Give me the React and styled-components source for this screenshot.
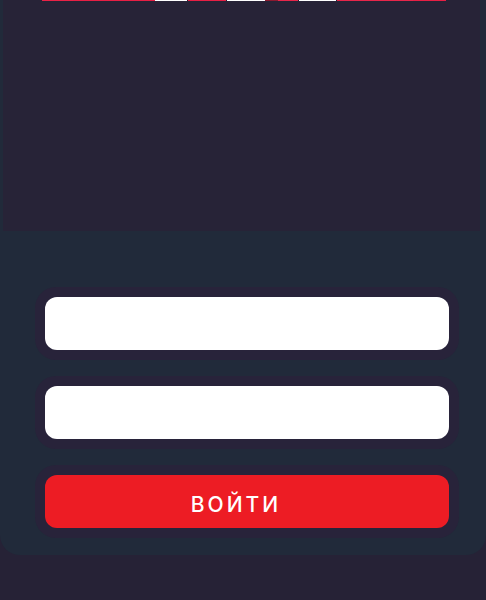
import React from "react";
import styled, { createGlobalStyle } from "styled-components";

const GlobalStyle = createGlobalStyle`
  html, body {
    margin: 0;
    padding: 0;
    background: #262236;
    font-family: "Open Sans", "Liberation Sans", sans-serif;
  }
`;

const Page = styled.div`
  width: 486px;
  min-height: 600px;
  background: #262236;
`;

const Card = styled.div`
  background: #212a3a;
  border-radius: 0 0 20px 20px;
  padding-bottom: 17px;
`;

const Hero = styled.div`
  position: relative;
  height: 231px;
  margin: 0 6px 0 3px;
  background: #272337;
`;

const Strip = styled.svg`
  position: absolute;
  top: 0;
  left: 36px;
  display: block;
`;

const Form = styled.form`
  display: flex;
  flex-direction: column;
  gap: 16px;
  padding: 56px 27px 0 35px;
`;

const Frame = styled.div`
  padding: 10px;
  background: #28233a;
  border-radius: 21px;
`;

const Input = styled.input`
  display: block;
  box-sizing: border-box;
  width: 100%;
  height: 53px;
  border: none;
  outline: none;
  border-radius: 12px;
  background: #ffffff;
  padding: 0 16px;
  font-size: 16px;
  font-family: inherit;
`;

const Button = styled.button`
  display: block;
  width: 100%;
  height: 53px;
  border: none;
  border-radius: 12px;
  background: #ed1c24;
  color: #ffffff;
  font-family: Inter, "Liberation Sans", sans-serif;
  font-size: 21px;
  font-weight: 500;
  letter-spacing: 3px;
  padding: 6px 22px 0 0;
  cursor: pointer;
`;

const segments = [
  [3, 34, "#ea2246"],
  [34, 116, "#e81f44"],
  [116, 148, "#ffffff"],
  [149, 187, "#e81f44"],
  [188, 226, "#ffffff"],
  [226, 239, "#8c1a30"],
  [239, 259, "#e8264a"],
  [260, 297, "#ffffff"],
  [298, 374, "#e8264a"],
  [374, 407, "#e81f44"],
];

export default function App() {
  return (
    <Page>
      <GlobalStyle />
      <Card>
        <Hero>
          <Strip width="410" height="1" viewBox="0 0 410 1">
            {segments.map(([a, b, c]) => (
              <rect key={a} x={a} y="0" width={b - a} height="1" fill={c} />
            ))}
          </Strip>
        </Hero>
        <Form onSubmit={(e) => e.preventDefault()}>
          <Frame>
            <Input type="text" />
          </Frame>
          <Frame>
            <Input type="password" />
          </Frame>
          <Frame>
            <Button type="submit">ВОЙТИ</Button>
          </Frame>
        </Form>
      </Card>
    </Page>
  );
}
